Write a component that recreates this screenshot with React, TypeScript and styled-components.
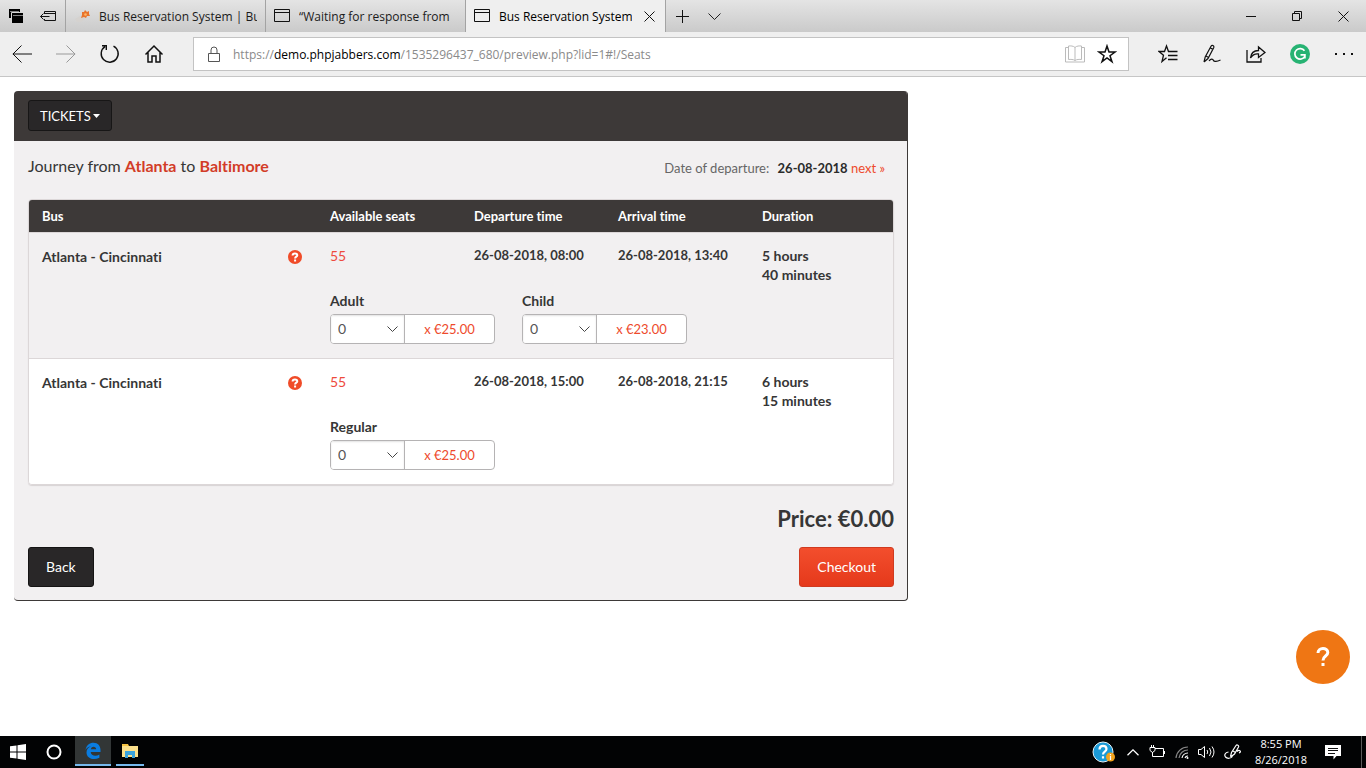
import React from "react";
import styled, { createGlobalStyle, css } from "styled-components";

const uiFont = `"Open Sans", "Noto Sans", sans-serif`;
const pageFont = `Lato, "Open Sans", sans-serif`;

const GlobalStyle = createGlobalStyle`
  *, *::before, *::after { box-sizing: border-box; }
  body {
    margin: 0;
    background: #fff;
    font-family: ${pageFont};
    font-size: 14px;
    font-variant-ligatures: none;
    color: #363636;
  }
  button, select { font: inherit; color: inherit; }
  button { padding: 0; border: 0; background: none; cursor: pointer; }
  svg { display: block; flex: none; }
`;

/* ---------- Layout ---------- */

const Screen = styled.div`
  display: flex;
  flex-direction: column;
  min-height: 100vh;
`;

const Content = styled.main`
  flex: 1;
  padding: 14px;
`;

/* ---------- Browser window ---------- */

const TabStrip = styled.header`
  display: flex;
  height: 32px;
  background: linear-gradient(#e4e4e4, #cacaca);
  font-family: ${uiFont};
  font-size: 12px;
  color: #1b1b1b;
`;

const TabTools = styled.div`
  display: flex;
  padding-right: 1px;
`;

const IconButton = styled.button<{ $width: number }>`
  display: flex;
  flex: none;
  align-items: center;
  justify-content: center;
  width: ${(p) => p.$width}px;
  height: 100%;
`;

const Tab = styled.div<{ $active?: boolean }>`
  display: flex;
  flex: 0 1 200px;
  align-items: center;
  min-width: 0;
  padding: 0 8px;
  gap: 9px;
  border-left: 1px solid #a3a3a3;
  ${(p) =>
    p.$active &&
    css`
      flex-basis: 201px;
      border-right: 1px solid #a3a3a3;
      background: #efefef;
      color: #000;
    `}
`;

const TabTitle = styled.span`
  flex: 1;
  overflow: hidden;
  white-space: nowrap;
`;

const WindowButtons = styled.div`
  display: flex;
  margin-left: auto;
`;

const Toolbar = styled.nav`
  display: flex;
  align-items: center;
  height: 45px;
  border-bottom: 1px solid #c6c6c6;
  background: #efefef;
`;

const ToolGroup = styled.div`
  display: flex;
  height: 100%;
`;

const AddressBar = styled.div`
  display: flex;
  flex: 1;
  align-items: center;
  min-width: 0;
  height: 34px;
  margin: 0 17px;
  padding: 0 5px 0 13px;
  border: 1px solid #c3c3c3;
  background: #fff;
`;

const Address = styled.div`
  flex: 1;
  overflow: hidden;
  padding-left: 12px;
  font-family: ${uiFont};
  font-size: 12px;
  white-space: nowrap;
  color: #8a8a8a;

  b {
    font-weight: 400;
    color: #000;
  }
`;

/* ---------- Booking panel ---------- */

const Panel = styled.section`
  width: 100%;
  max-width: 894px;
  overflow: hidden;
  border: solid #3d3938;
  border-width: 0 1px 1px 0;
  border-radius: 4px;
  background: #f2f0f1;
`;

const PanelHeader = styled.div`
  padding: 9px 14px 10px;
  background: #3d3938;
`;

const TicketsButton = styled.button`
  display: flex;
  align-items: center;
  gap: 2px;
  height: 31px;
  padding: 0 11px;
  border: 1px solid #171616;
  border-radius: 3px;
  background: #292728;
  font-size: 13px;
  color: #fff;
`;

const PanelBody = styled.div`
  padding: 14px 13px 13px 14px;
`;

const Summary = styled.div`
  display: flex;
  justify-content: space-between;
  height: 44px;
`;

const Journey = styled.h1`
  margin: 0;
  font-size: 16px;
  font-weight: 400;
  line-height: 22px;

  strong {
    color: #d23c28;
  }
`;

const Departure = styled.div`
  padding-right: 9px;
  font-size: 13px;
  line-height: 26px;
  color: #666;

  strong {
    margin-left: 5px;
    color: #2b2b2b;
  }

  a {
    color: #ee4a2c;
    text-decoration: none;
  }
`;

const TableFrame = styled.div`
  overflow: hidden;
  border: 1px solid #dcd7d8;
  border-radius: 4px;
  box-shadow: 0 1px 1px #d8d3d4;
`;

const TripTable = styled.table`
  width: 100%;
  border-spacing: 0;
  table-layout: fixed;
  line-height: 19px;
  text-align: left;

  th,
  td {
    padding: 0 13px;
    vertical-align: top;
  }

  thead th {
    height: 33px;
    border-bottom: 1px solid #dcd7d8;
    background: #3d3938;
    font-size: 13px;
    line-height: 32px;
    color: #fff;
  }

  thead th:first-child {
    width: 33.3333%;
  }
`;

const TripGroup = styled.tbody`
  font-weight: 700;

  tr:first-child > * {
    padding-top: 13px;
  }

  &:nth-of-type(even) {
    background: #fff;
  }

  & + & tr:first-child > * {
    border-top: 1px solid #dcd7d8;
  }
`;

const RouteName = styled.div`
  display: flex;
  align-items: center;
  justify-content: space-between;
  padding-right: 2px;
  line-height: 21px;
`;

const TimeCell = styled.td`
  font-size: 13px;
`;

const SeatsLink = styled.a`
  font-weight: 400;
  color: #ee4a3c;
  text-decoration: none;
`;

const FareCell = styled.td`
  && {
    padding: 7px 14px 14px 13px;
  }
`;

const FareGrid = styled.div`
  display: grid;
  grid-template-columns: repeat(3, 1fr);
  gap: 27px;
`;

const FareLabel = styled.label`
  display: block;
  margin-bottom: 4px;
`;

const FareControl = styled.div`
  display: flex;
  height: 30px;
  overflow: hidden;
  border: 1px solid #b5b3b4;
  border-radius: 4px;
  background: #fff;
  font-weight: 400;
`;

const SelectBox = styled.div`
  position: relative;
  flex: 0 0 74px;
  border-right: 1px solid #b5b3b4;

  svg {
    position: absolute;
    top: 11px;
    right: 6px;
    pointer-events: none;
  }
`;

const Select = styled.select`
  appearance: none;
  width: 100%;
  height: 28px;
  padding: 0 7px 2px;
  border: 0;
  background: #fff;
  box-shadow: inset 0 1px 2px #e2e2e2;
  color: #555;
`;

const FarePrice = styled.span`
  flex: 1;
  font-size: 13px;
  line-height: 28px;
  text-align: center;
  color: #ee4a2c;
`;

const Total = styled.div`
  margin: 20px 0 14px;
  font-size: 22px;
  font-weight: 700;
  line-height: 28px;
  text-align: right;
`;

const Actions = styled.div`
  display: flex;
  justify-content: space-between;
`;

const ActionButton = styled.button<{ $primary?: boolean }>`
  height: 40px;
  padding: 0 17px 2px;
  border: 1px solid ${(p) => (p.$primary ? "#d03a20" : "#151414")};
  border-radius: 3px;
  background: ${(p) => (p.$primary ? "linear-gradient(#f34e2d, #e5391b)" : "#292728")};
  color: #fff;
`;

const HelpBubble = styled.button`
  position: fixed;
  right: 16px;
  bottom: 84px;
  display: flex;
  align-items: center;
  justify-content: center;
  width: 54px;
  height: 54px;
  border-radius: 50%;
  background: #ef7614;
`;

/* ---------- Task bar ---------- */

const TaskBar = styled.footer`
  display: flex;
  justify-content: space-between;
  height: 32px;
  background: #020304;
  font-family: ${uiFont};
  font-size: 11px;
  line-height: 16px;
  color: #fff;
`;

const TaskGroup = styled.div`
  display: flex;
`;

const TaskApp = styled.button<{ $active?: boolean }>`
  display: flex;
  flex-direction: column;
  align-items: center;
  width: ${(p) => (p.$active ? 36 : 28)}px;
  height: 30px;
  margin-left: ${(p) => (p.$active ? 3 : 5)}px;
  padding-top: 6px;
  border-bottom: 2px solid #76b9ed;
  background: ${(p) => (p.$active ? "#323636" : "none")};
`;

const Clock = styled.time`
  width: 64px;
  text-align: center;
`;

const DesktopEdge = styled.button`
  width: 5px;
  margin-left: 8px;
  border-left: 1px solid #5a5a5a;
`;

/* ---------- Icons ---------- */

type IconProps = { w: number; h: number; children: React.ReactNode; stroke?: string; sw?: number };

const Icon = ({ w, h, children, stroke = "#111", sw = 1 }: IconProps) => (
  <svg width={w} height={h} viewBox={`0 0 ${w} ${h}`} fill="none" stroke={stroke} strokeWidth={sw} aria-hidden="true">
    {children}
  </svg>
);

const TabsAsideIcon = () => (
  <Icon w={14} h={14} stroke="none">
    <path fill="#000" d="M0 0h11v9H0z" />
    <path fill="#000" stroke="#d8d8d8" d="M2.500 3.500h12v11h-12z" />
    <path stroke="#d8d8d8" d="M4 6.500h10M1 2.500h9" strokeWidth=".6" />
  </Icon>
);

const SetAsideIcon = () => (
  <Icon w={16} h={12}>
    <path d="M4.500 4V1.500h11v9h-11V9M4.500 3.500h11M.5 6.500h9M3.500 3.500l-3 3 3 3" />
  </Icon>
);

const PinwheelIcon = () => (
  <Icon w={16} h={14} stroke="none">
    <path fill="#d5d2cf" d="M1 10l5-3 5 3-4 3H3z" />
    <path fill="#e9742c" d="M8 3l2 0 1-2 2 2 2-1 0 3 1 2-3 0-1 2-2-1-3 1 1-3z" />
    <circle cx="11.500" cy="5.500" r="1.300" fill="#ffb765" />
  </Icon>
);

const WindowIcon = () => (
  <Icon w={16} h={14}>
    <path d="M.5.5h15v12H.5zM.5 3.500h15" />
  </Icon>
);

const ChevronDown = ({ w = 12, color = "#222" }: { w?: number; color?: string }) => (
  <Icon w={w} h={7} stroke={color}>
    <path d={`M.5.5L${w / 2} ${w / 2}L${w - 0.5}.5`} />
  </Icon>
);

const QuestionIcon = () => (
  <Icon w={14} h={14} stroke="#fff" sw={2}>
    <circle cx="7" cy="7" r="7" fill="#f04b28" stroke="none" />
    <path d="M4.600 5.500C4.600 2.700 9.300 2.800 9.300 5.200 9.300 6.700 7.100 6.600 7.100 8.500M7.100 9.500v1.900" />
  </Icon>
);

/* ---------- Data ---------- */

const trips = [
  {
    id: "morning",
    departs: "26-08-2018, 08:00",
    arrives: "26-08-2018, 13:40",
    duration: ["5 hours", "40 minutes"],
    fares: [
      { name: "Adult", price: "€25.00" },
      { name: "Child", price: "€23.00" },
    ],
  },
  {
    id: "afternoon",
    departs: "26-08-2018, 15:00",
    arrives: "26-08-2018, 21:15",
    duration: ["6 hours", "15 minutes"],
    fares: [{ name: "Regular", price: "€25.00" }],
  },
];

/* ---------- Sections ---------- */

const BrowserChrome = () => (
  <>
    <TabStrip>
      <TabTools>
        <IconButton $width={32} aria-label="Tabs you have set aside"><TabsAsideIcon /></IconButton>
        <IconButton $width={32} aria-label="Set these tabs aside"><SetAsideIcon /></IconButton>
      </TabTools>
      <Tab>
        <PinwheelIcon />
        <TabTitle>Bus Reservation System | Bu</TabTitle>
      </Tab>
      <Tab>
        <WindowIcon />
        <TabTitle>“Waiting for response from</TabTitle>
      </Tab>
      <Tab $active>
        <WindowIcon />
        <TabTitle>Bus Reservation System</TabTitle>
        <IconButton $width={16} aria-label="Close tab">
          <Icon w={11} h={11}><path d="M.5.5l10 10M10.500.5l-10 10" /></Icon>
        </IconButton>
      </Tab>
      <IconButton $width={32} aria-label="New tab">
        <Icon w={13} h={13}><path d="M6.500 0v13M0 6.500h13" /></Icon>
      </IconButton>
      <IconButton $width={32} aria-label="Show tab previews"><ChevronDown w={13} /></IconButton>
      <WindowButtons>
        <IconButton $width={46} aria-label="Minimize">
          <Icon w={10} h={1}><path d="M0 .5h10" /></Icon>
        </IconButton>
        <IconButton $width={46} aria-label="Restore">
          <Icon w={10} h={10}><path d="M.5 2.500h7v7h-7zM2.500 2.500v-2h7v7h-2" /></Icon>
        </IconButton>
        <IconButton $width={46} aria-label="Close">
          <Icon w={11} h={11}><path d="M.5.5l10 10M10.500.5l-10 10" /></Icon>
        </IconButton>
      </WindowButtons>
    </TabStrip>
    <Toolbar>
      <ToolGroup>
        <IconButton $width={44} aria-label="Back">
          <Icon w={20} h={18}><path d="M.8 9H20M9.500.5L1 9l8.500 8.500" /></Icon>
        </IconButton>
        <IconButton $width={44} aria-label="Forward">
          <Icon w={20} h={18} stroke="#999"><path d="M0 9h19.200M10.500.5L19 9l-8.500 8.500" /></Icon>
        </IconButton>
        <IconButton $width={44} aria-label="Refresh">
          <Icon w={20} h={20} sw={1.4}><path d="M13.500 2.100A8.500 8.500 0 1 1 5 2.600M2 1.700h4.300V6" /></Icon>
        </IconButton>
        <IconButton $width={44} aria-label="Home">
          <Icon w={20} h={20} sw={1.5}><path d="M1.500 10.500L10 2l8.500 8.500M4 8.500V18h4v-6h4v6h4V8.500" /></Icon>
        </IconButton>
      </ToolGroup>
      <AddressBar>
        <Icon w={14} h={17} stroke="#555"><path d="M1.500 7.500h11v8h-11zM4 7.500V4a3 3 0 0 1 6 0v3.500" /></Icon>
        <Address>
          https://<b>demo.phpjabbers.com</b>/1535296437_680/preview.php?lid=1#!/Seats
        </Address>
        <IconButton $width={32} aria-label="Reading view">
          <Icon w={20} h={18} stroke="#bbb">
            <path d="M10 2.500C8.500.8 5.500.8 3.500 1v13.500c2-.2 5-.2 6.500 1 1.500-1.200 4.500-1.200 6.500-1V1C14.500.8 11.500.8 10 2.500zM10 2.500v13M3 2.500H.500V17h19V2.500H17" />
          </Icon>
        </IconButton>
        <IconButton $width={32} aria-label="Add to favorites">
          <Icon w={20} h={20} sw={1.5}>
            <path d="M10 2l2 6h6l-5 3.700 2 6-5-3.700-5 3.700 2-6L2 8h6z" />
          </Icon>
        </IconButton>
      </AddressBar>
      <ToolGroup>
        <IconButton $width={44} aria-label="Favorites">
          <Icon w={20} h={20} sw={1.3}>
            <path d="M19.500 7.500h-9L8.500 2l-2 5.500H1l4.500 3.700L4 17.500l4.500-3.700M10 11.500h9.500M10 15.500h9.500" />
          </Icon>
        </IconButton>
        <IconButton $width={44} aria-label="Add notes">
          <Icon w={18} h={20} sw={1.2}>
            <path d="M1 18l1.200-5L8 2.200C9 .6 11.400 1.600 10.800 3.500L5 14.500 1 18M7 3.800l3 1.600M3 12l2.500 1.500M6 17c2-3 4-2 4.500-.5s3.500 1 7-.5" />
          </Icon>
        </IconButton>
        <IconButton $width={44} aria-label="Share">
          <Icon w={20} h={18} sw={1.3}>
            <path d="M1 5v12h14v-4M4.500 13C5 8.500 8 5.500 12.500 5.500V2l6.500 5.500-6.500 5V9C9 8.500 6.500 10 4.500 13z" />
          </Icon>
        </IconButton>
        <IconButton $width={44} aria-label="Grammarly">
          <Icon w={20} h={20} stroke="#fff" sw={1.7}>
            <circle cx="10" cy="10" r="10" fill="#27b373" stroke="none" />
            <path d="M14.500 6.800A5.300 5.300 0 1 0 14.800 12.400M10.500 10.800h4.400v3.700" />
          </Icon>
        </IconButton>
        <IconButton $width={44} aria-label="Settings and more">
          <Icon w={18} h={2} stroke="none"><path fill="#111" d="M0 0h2v2H0zM8 0h2v2H8zM16 0h2v2h-2z" /></Icon>
        </IconButton>
      </ToolGroup>
    </Toolbar>
  </>
);

const TripRows = ({ trip }: { trip: (typeof trips)[number] }) => (
  <TripGroup>
    <tr>
      <td>
        <RouteName>
          Atlanta - Cincinnati
          <button aria-label="Route details"><QuestionIcon /></button>
        </RouteName>
      </td>
      <td><SeatsLink href="#seats">55</SeatsLink></td>
      <TimeCell>{trip.departs}</TimeCell>
      <TimeCell>{trip.arrives}</TimeCell>
      <td>{trip.duration[0]}<br />{trip.duration[1]}</td>
    </tr>
    <tr>
      <td />
      <FareCell colSpan={4}>
        <FareGrid>
          {trip.fares.map((fare) => {
            const id = `${trip.id}-${fare.name}`;
            return (
              <div key={id}>
                <FareLabel htmlFor={id}>{fare.name}</FareLabel>
                <FareControl>
                  <SelectBox>
                    <Select id={id} defaultValue="0">
                      <option>0</option>
                      <option>1</option>
                      <option>2</option>
                      <option>3</option>
                    </Select>
                    <ChevronDown w={11} color="#444" />
                  </SelectBox>
                  <FarePrice>x {fare.price}</FarePrice>
                </FareControl>
              </div>
            );
          })}
        </FareGrid>
      </FareCell>
    </tr>
  </TripGroup>
);

const BookingPanel = () => (
  <Panel>
    <PanelHeader>
      <TicketsButton>
        TICKETS
        <Icon w={7} h={4} stroke="none"><path fill="#fff" d="M0 0h7L3.500 4z" /></Icon>
      </TicketsButton>
    </PanelHeader>
    <PanelBody>
      <Summary>
        <Journey>Journey from <strong>Atlanta</strong> to <strong>Baltimore</strong></Journey>
        <Departure>
          Date of departure: <strong>26-08-2018</strong> <a href="#next">next »</a>
        </Departure>
      </Summary>
      <TableFrame>
        <TripTable>
          <thead>
            <tr>
              <th>Bus</th>
              <th>Available seats</th>
              <th>Departure time</th>
              <th>Arrival time</th>
              <th>Duration</th>
            </tr>
          </thead>
          {trips.map((trip) => <TripRows key={trip.id} trip={trip} />)}
        </TripTable>
      </TableFrame>
      <Total>Price: €0.00</Total>
      <Actions>
        <ActionButton>Back</ActionButton>
        <ActionButton $primary>Checkout</ActionButton>
      </Actions>
    </PanelBody>
  </Panel>
);

const WindowsTaskBar = () => (
  <TaskBar>
    <TaskGroup>
      <IconButton $width={36} aria-label="Start">
        <Icon w={16} h={16} stroke="none">
          <path fill="#fff" d="M0 2.300L6.500 1.400V7.500H0zM7.500 1.200L16 0v7.500H7.500zM0 8.500h6.500v6.100L0 13.700zM7.500 8.500H16V16l-8.500-1.200z" />
        </Icon>
      </IconButton>
      <IconButton $width={36} aria-label="Search">
        <Icon w={16} h={16} stroke="#fff" sw={2}><circle cx="8" cy="8" r="6.500" /></Icon>
      </IconButton>
      <TaskApp $active aria-label="Microsoft Edge">
        <Icon w={16} h={18} stroke="none">
          <path fill="#0a7ce0" d="M.5 8C1.500 3 4.500.8 8.500.8c4.500 0 7 3.200 7 7.200v2H5.700c.3 4 5.300 4.600 8.700 2.500v3.300C8.500 18.700 1.500 16.500 1.500 10.500 1.500 7.500 3.500 5.300 6 4.300 3.500 4.600 1.700 6 .5 8zM5.800 7.200h5.400C11.200 4 6.400 3.600 5.800 7.200z" />
        </Icon>
      </TaskApp>
      <TaskApp aria-label="File Explorer">
        <Icon w={18} h={18} stroke="none">
          <path fill="#f5c242" d="M1 2h6l1 2h9v3H1z" />
          <path fill="#fbe08c" d="M1 4h16v11H1z" />
          <path fill="#3ba3dc" d="M4 9h10v7h-3v-3H7v3H4z" />
        </Icon>
      </TaskApp>
    </TaskGroup>
    <TaskGroup>
      <IconButton $width={34} aria-label="Help">
        <Icon w={24} h={24} stroke="#fff" sw={2.2}>
          <circle cx="11" cy="12" r="10" fill="#1a9ad7" stroke="#e8f4fa" strokeWidth="1" />
          <path d="M7.500 9.500C7.500 4.500 14.500 5 14.500 9c0 2.800-3.500 2.500-3.500 5.500M11 16.200v2.300" />
          <circle cx="18.500" cy="17" r="4.500" fill="#f2a31c" stroke="none" />
          <path strokeWidth="1.200" d="M18.500 14v1.200M18.500 16v4" />
        </Icon>
      </IconButton>
      <IconButton $width={24} aria-label="Show hidden icons">
        <Icon w={12} h={7} stroke="#fff" sw={1.3}><path d="M.5 6.300L6 .9l5.500 5.400" /></Icon>
      </IconButton>
      <IconButton $width={24} aria-label="Battery">
        <Icon w={16} h={14} stroke="#fff">
          <path d="M6 3.500h8.500v8H3.500V9M15.500 6v3M1 2.500h5v3L3.500 7.500 1 5.500zM2.500 0v2M4.500 0v2M3.500 7v2" />
        </Icon>
      </IconButton>
      <IconButton $width={26} aria-label="Network">
        <Icon w={14} h={14} stroke="#888" sw={1.2}>
          <path d="M1 13A12 12 0 0 1 13 2M4 13a9 9 0 0 1 9-8" />
          <path stroke="#fff" d="M7 13a6 6 0 0 1 6-5M10 13a3 3 0 0 1 3-2" />
          <circle cx="12.500" cy="13" r="1" fill="#fff" stroke="none" />
        </Icon>
      </IconButton>
      <IconButton $width={22} aria-label="Volume">
        <Icon w={17} h={14} stroke="#fff">
          <path d="M.5 4.500h2.500L6.500 1.500v11L3 9.500H.5zM9 5q1.500 2 0 4M11.500 3q3 4 0 8M14 1.500q4 5.500 0 11" />
        </Icon>
      </IconButton>
      <IconButton $width={32} aria-label="Windows Ink">
        <Icon w={18} h={16} stroke="#fff" sw={1.2}>
          <path d="M6.500 12.500l1-4L12 1.500c1-1.300 3.200 0 2.500 1.500L10.500 10l-4 3M4.500 8C1 8.500 0 11 1.500 13c1.700 2 5.500 1.500 7-.5M13 7.500c2.500-2.500 5 .5 2 1.500M9 7l2.500 1.500" />
        </Icon>
      </IconButton>
      <Clock dateTime="2018-08-26T20:55">8:55 PM<br />8/26/2018</Clock>
      <IconButton $width={40} aria-label="Notifications">
        <Icon w={16} h={16} stroke="none">
          <path fill="#fff" d="M0 1h16v11h-4.500L8.500 15.500v-3.500H0z" />
          <path stroke="#111" d="M3 4.500h10M3 6.500h10M3 9.500h7" />
        </Icon>
      </IconButton>
      <DesktopEdge aria-label="Show desktop" />
    </TaskGroup>
  </TaskBar>
);

export default function App() {
  return (
    <Screen>
      <GlobalStyle />
      <BrowserChrome />
      <Content>
        <BookingPanel />
      </Content>
      <HelpBubble aria-label="Help">
        <Icon w={14} h={20} stroke="#fff" sw={3}>
          <path d="M2 6C2 .2 11.800.2 11.800 5.500 11.800 9.300 7 8.800 7 13.500M7 16v3" />
        </Icon>
      </HelpBubble>
      <WindowsTaskBar />
    </Screen>
  );
}
